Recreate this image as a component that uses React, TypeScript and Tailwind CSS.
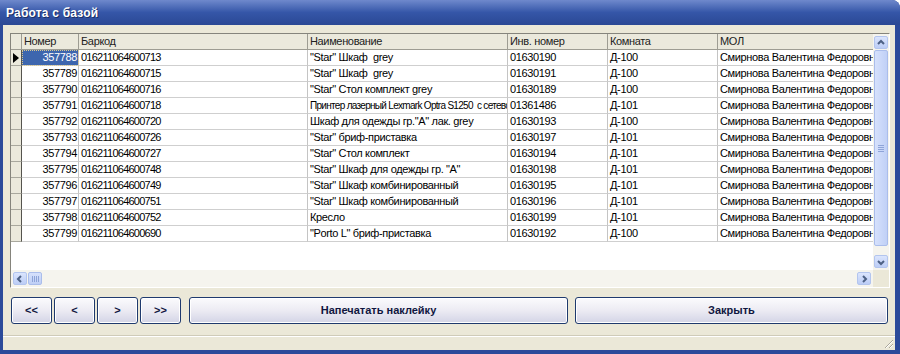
import React from 'react'

const rows = [
  ['357788', '016211064600713', '"Star" Шкаф  grey', '01630190', 'Д-100'],
  ['357789', '016211064600715', '"Star" Шкаф  grey', '01630191', 'Д-100'],
  ['357790', '016211064600716', '"Star" Стол комплект grey', '01630189', 'Д-100'],
  ['357791', '016211064600718', 'Принтер лазерный Lexmark Optra S1250  с сетевой картой', '01361486', 'Д-101'],
  ['357792', '016211064600720', 'Шкаф для одежды гр."А" лак. grey', '01630193', 'Д-100'],
  ['357793', '016211064600726', '"Star" бриф-приставка', '01630197', 'Д-101'],
  ['357794', '016211064600727', '"Star" Стол комплект', '01630194', 'Д-101'],
  ['357795', '016211064600748', '"Star" Шкаф для одежды гр. "А"', '01630198', 'Д-101'],
  ['357796', '016211064600749', '"Star" Шкаф комбинированный', '01630195', 'Д-101'],
  ['357797', '016211064600751', '"Star" Шкаф комбинированный', '01630196', 'Д-101'],
  ['357798', '016211064600752', 'Кресло', '01630199', 'Д-101'],
  ['357799', '016211064600690', '"Porto L" бриф-приставка', '01630192', 'Д-100'],
]

const headers = ['Номер', 'Баркод', 'Наименование', 'Инв. номер', 'Комната', 'МОЛ']
const widths = ['w-[57px]', 'w-[229px]', 'w-[200px]', 'w-[100px]', 'w-[110px]', 'w-[200px]']

function Arrow({ dir }: { dir: 'up' | 'down' | 'left' | 'right' }) {
  const d = {
    up: 'M3 7 L6 4 L9 7',
    down: 'M3 5 L6 8 L9 5',
    left: 'M7 3 L4 6 L7 9',
    right: 'M5 3 L8 6 L5 9',
  }[dir]
  return (
    <svg width="12" height="12" viewBox="0 0 12 12">
      <path d={d} fill="none" stroke="#4d6185" strokeWidth="2" />
    </svg>
  )
}

function ScrollBtn({ dir }: { dir: 'up' | 'down' | 'left' | 'right' }) {
  return (
    <div className="w-[14px] h-[13px] flex items-center justify-center rounded-[2px] border border-[#b3c5ee] bg-gradient-to-b from-[#dbe5fd] to-[#bccdf6]">
      <Arrow dir={dir} />
    </div>
  )
}

function NavButton({ label, className }: { label: string; className: string }) {
  return (
    <button
      className={`${className} h-[27px] rounded-[3px] border border-[#1f3a6e] bg-gradient-to-b from-[#fbfbfd] via-[#ecebf3] to-[#d3d4e6] shadow-[inset_0_0_0_1px_#ffffff] text-[11px] font-bold text-[#101640] flex items-center justify-center`}
    >
      {label}
    </button>
  )
}

// ширина цифр/текста по столбцам, чтобы ближе к Tahoma
function cellTrack(i: number, text: string) {
  if (i === 1) return 'tracking-[-0.75px]'
  if (i === 2 && text.startsWith('Принтер')) return 'text-[10px] tracking-[-0.7px]'
  return ''
}

export default function App() {
  return (
    <div className="w-[900px] h-[354px] overflow-hidden bg-[#2b4a9a] rounded-tr-[8px] flex flex-col font-['Liberation_Sans',Arial,sans-serif]">
      {/* заголовок окна */}
      <div className="h-[25px] shrink-0 px-[6px] flex items-center bg-gradient-to-b from-[#6f89cc] via-[#3556a8] to-[#2a4894]">
        <span className="text-white font-bold text-[12px] tracking-[0.2px] [text-shadow:1px_1px_0_#1b2f66]">
          Работа с базой
        </span>
      </div>

      <div className="flex-1 ml-[3px] mr-[5px] mb-[4px] bg-[#ebe8d8] flex flex-col">
        {/* таблица */}
        <div className="mt-[8px] ml-[7px] w-[880px] h-[255px] border border-t-[#85847c] border-l-[#85847c] border-r-white border-b-white flex">
          <div className="w-[862px] flex flex-col">
            <div className="h-[236px] bg-white overflow-hidden text-[11px] tracking-[-0.35px] text-black">
              <div className="flex h-[16px] bg-[#ebe9dc]">
                <div className="w-[11px] shrink-0 border-r border-b border-[#9d9c92]" />
                {headers.map((h, i) => (
                  <div
                    key={h}
                    className={`${widths[i]} shrink-0 border-r border-b border-[#9d9c92] pl-[2px] leading-[15px] text-[#222] whitespace-nowrap overflow-hidden`}
                  >
                    {h}
                  </div>
                ))}
              </div>
              {rows.map((r, idx) => (
                <div key={r[0]} className="flex h-[16px]">
                  <div className="w-[11px] shrink-0 bg-[#ebe9dc] border-r border-r-[#55544e] border-b border-b-[#a9a89e] flex items-center">
                    {idx === 0 && (
                      <svg width="8" height="10" viewBox="0 0 8 10" className="ml-[1px]">
                        <path d="M1 0 L7 5 L1 10 Z" fill="#000" />
                      </svg>
                    )}
                  </div>
                  {[...r, 'Смирнова Валентина Федоровна'].map((c, i) => (
                    <div
                      key={i}
                      className={`${widths[i]} shrink-0 border-r border-r-[#c4c4c4] border-b border-b-[#cfcfcf] leading-[15px] whitespace-pre overflow-hidden ${cellTrack(i, c)} ${
                        i === 0 ? 'text-right pr-[1px]' : 'pl-[2px]'
                      } ${idx === 0 && i === 0 ? 'bg-[#3d66ae] text-white outline-1 outline-dotted outline-[#d8c890] -outline-offset-1' : ''}`}
                    >
                      {c}
                    </div>
                  ))}
                </div>
              ))}
            </div>
            {/* горизонтальная прокрутка */}
            <div className="h-[17px] bg-[#f5f4ee] flex items-center pl-[2px] pr-[2px]">
              <ScrollBtn dir="left" />
              <div className="ml-[1px] w-[14px] h-[13px] rounded-[2px] border border-[#aabdeb] bg-gradient-to-b from-[#d6e1fc] to-[#bfcff6] flex items-center justify-center gap-[1px]">
                {[0, 1, 2, 3].map((k) => (
                  <div key={k} className="w-[1px] h-[6px] bg-[#8ea4d8]" />
                ))}
              </div>
              <div className="flex-1" />
              <ScrollBtn dir="right" />
            </div>
          </div>
          {/* вертикальная прокрутка */}
          <div className="w-[16px] flex flex-col">
            <div className="h-[236px] bg-[#f5f4ee] flex flex-col items-center pt-[2px] pb-[2px]">
              <ScrollBtn dir="up" />
              <div className="mt-[1px] w-[14px] h-[196px] rounded-[2px] border border-[#aabdeb] bg-gradient-to-r from-[#d6e1fc] to-[#c0d0f6] flex flex-col items-center justify-center gap-[1px]">
                {[0, 1, 2, 3].map((k) => (
                  <div key={k} className="w-[6px] h-[1px] bg-[#8ea4d8]" />
                ))}
              </div>
              <div className="flex-1" />
              <ScrollBtn dir="down" />
            </div>
            <div className="h-[17px] bg-[#ebe8d8]" />
          </div>
        </div>

        {/* кнопки */}
        <div className="mt-[9px] ml-[8px] flex">
          <NavButton label="<<" className="w-[41px]" />
          <NavButton label="<" className="w-[41px] ml-[2px]" />
          <NavButton label=">" className="w-[41px] ml-[2px]" />
          <NavButton label=">>" className="w-[41px] ml-[2px]" />
          <NavButton label="Напечатать наклейку" className="w-[379px] ml-[8px]" />
          <NavButton label="Закрыть" className="w-[313px] ml-[7px]" />
        </div>

        {/* строка состояния */}
        <div className="mt-auto h-[15px] border-t border-t-[#cfcbb9] shadow-[inset_0_1px_0_#ffffff] flex justify-end items-end">
          <svg width="12" height="12" viewBox="0 0 12 12" className="mr-[1px] mb-[1px]">
            <path d="M11 3 L3 11 M11 7 L7 11" stroke="#aaa79a" strokeWidth="1" />
            <path d="M11 4 L4 11 M11 8 L8 11" stroke="#ffffff" strokeWidth="1" />
          </svg>
        </div>
      </div>
    </div>
  )
}
